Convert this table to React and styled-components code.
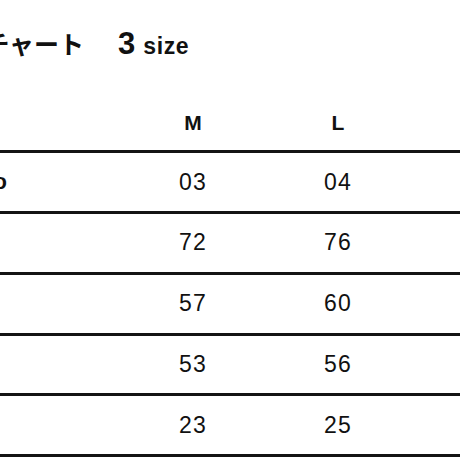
import React from 'react'
import styled, { createGlobalStyle } from 'styled-components'

const GlobalStyle = createGlobalStyle`
  html, body {
    margin: 0;
    padding: 0;
    background: #fff;
  }
  body {
    font-family: "Liberation Sans", "Noto Sans CJK JP", sans-serif;
    color: #111;
    overflow: hidden;
  }
`

const Frame = styled.div`
  width: 460px;
  height: 460px;
  overflow: hidden;
`

// the chart is wider than the frame, its left part lies outside the crop
const Sheet = styled.div`
  margin-left: -110px;
  width: 570px;
`

const Title = styled.h2`
  margin: 0;
  height: 92.5px;
  box-sizing: border-box;
  padding: 28px 0 0 20px;
  display: flex;
  align-items: baseline;
  font-weight: 700;
  line-height: 1;
`

const TitleJa = styled.span`
  font-family: "Noto Sans CJK JP", sans-serif;
  font-size: 25px;
  font-weight: 700;
`

const TitleCount = styled.span`
  margin-left: 34px;
  font-family: "Liberation Sans", sans-serif;
  font-size: 31px;
`

const TitleUnit = styled.span`
  margin-left: 8px;
  font-family: "Liberation Sans", sans-serif;
  font-size: 23px;
  letter-spacing: 0.6px;
`

const Row = styled.div`
  display: grid;
  grid-template-columns: 230.5px 145px 145px 50px;
  height: 60.8px;
  box-sizing: border-box;
  border-bottom: 3px solid #141414;
  padding-top: ${p => (p.$head ? '3px' : '0')};
`

const Label = styled.div`
  display: flex;
  align-items: center;
  padding-left: 18px;
  font-size: 22px;
  font-weight: 700;
  font-family: "Liberation Sans", "Noto Sans CJK JP", sans-serif;
`

const Cell = styled.div`
  display: flex;
  align-items: center;
  justify-content: center;
  font-size: ${p => (p.$head ? '21px' : '23px')};
  font-weight: ${p => (p.$head ? 700 : 400)};
  letter-spacing: ${p => (p.$head ? '0' : '1.2px')};
`

const sizes = ['M', 'L']

const rows = [
  { label: 'Model No', values: ['03', '04'] },
  { label: '着丈', values: ['72', '76'] },
  { label: '身幅', values: ['57', '60'] },
  { label: '肩幅', values: ['53', '56'] },
  { label: '袖丈', values: ['23', '25'] }
]

export default function App() {
  return (
    <Frame>
      <GlobalStyle />
      <Sheet>
        <Title>
          <TitleJa>サイズチャート</TitleJa>
          <TitleCount>3</TitleCount>
          <TitleUnit>size</TitleUnit>
        </Title>
        <Row $head>
          <Label />
          {sizes.map(s => (
            <Cell key={s} $head>
              {s}
            </Cell>
          ))}
        </Row>
        {rows.map(r => (
          <Row key={r.label}>
            <Label>{r.label}</Label>
            {r.values.map((v, i) => (
              <Cell key={i}>{v}</Cell>
            ))}
          </Row>
        ))}
      </Sheet>
    </Frame>
  )
}
